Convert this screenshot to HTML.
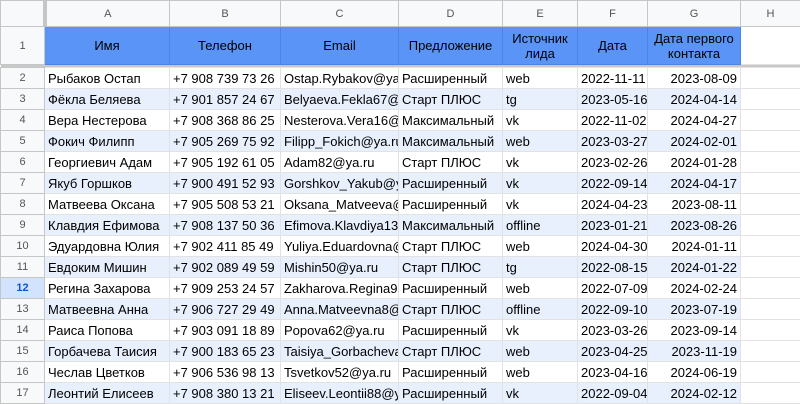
<html><head><style>
body{margin:0;width:800px;height:400px;overflow:hidden;background:#fff;font-family:"Liberation Sans",Arial,sans-serif;}
table{border-collapse:collapse;table-layout:fixed;position:absolute;left:0;top:0;width:800px;}
td{border:1px solid #e2e2e2;padding:0 3px;font-size:13px;color:#000;white-space:nowrap;overflow:hidden;height:20px;box-sizing:border-box;}
tr{height:21px;}
.ch{height:26px;}
.ch td{background:#f8f9fa;color:#555;font-size:11px;text-align:center;border-color:#c4c7c5;height:26px;}
.rh{background:#f8f9fa;color:#555;font-size:11px;text-align:center;border-color:#c4c7c5;padding:0;}
.h{height:38px;}
.h td{height:38px;white-space:normal;}
.h td.c{background:#5a94f7;text-align:center;border-color:#4a84e6;line-height:15px;}
.b td.c{background:#e8f0fe;}
.r{text-align:right;}
.sel{background:#d3e3fd !important;color:#0b57d0 !important;font-weight:bold;}
.fr{height:3px;}
.fr td{height:3px;padding:0;background:#c8c8c8;border:none;}
</style></head><body>
<table>
<colgroup><col style="width:44px"><col style="width:125px"><col style="width:111px"><col style="width:118px"><col style="width:104px"><col style="width:75px"><col style="width:70px"><col style="width:93px"><col style="width:60px"></colgroup>
<tr class="ch"><td style="border-right:4px solid #c4c7c5"></td><td>A</td><td>B</td><td>C</td><td>D</td><td>E</td><td>F</td><td>G</td><td>H</td></tr>
<tr class="h"><td class="rh">1</td><td class="c">Имя</td><td class="c">Телефон</td><td class="c">Email</td><td class="c">Предложение</td><td class="c">Источник лида</td><td class="c">Дата</td><td class="c">Дата первого контакта</td><td></td></tr>
<tr class="fr"><td colspan="9"></td></tr>
<tr><td class="rh">2</td><td class="c">Рыбаков Остап</td><td class="c">+7 908 739 73 26</td><td class="c">Ostap.Rybakov@ya.ru</td><td class="c">Расширенный</td><td class="c">web</td><td class="c">2022-11-11</td><td class="c r">2023-08-09</td><td></td></tr>
<tr class="b"><td class="rh">3</td><td class="c">Фёкла Беляева</td><td class="c">+7 901 857 24 67</td><td class="c">Belyaeva.Fekla67@ya.ru</td><td class="c">Старт ПЛЮС</td><td class="c">tg</td><td class="c">2023-05-16</td><td class="c r">2024-04-14</td><td></td></tr>
<tr><td class="rh">4</td><td class="c">Вера Нестерова</td><td class="c">+7 908 368 86 25</td><td class="c">Nesterova.Vera16@ya.ru</td><td class="c">Максимальный</td><td class="c">vk</td><td class="c">2022-11-02</td><td class="c r">2024-04-27</td><td></td></tr>
<tr class="b"><td class="rh">5</td><td class="c">Фокич Филипп</td><td class="c">+7 905 269 75 92</td><td class="c">Filipp_Fokich@ya.ru</td><td class="c">Максимальный</td><td class="c">web</td><td class="c">2023-03-27</td><td class="c r">2024-02-01</td><td></td></tr>
<tr><td class="rh">6</td><td class="c">Георгиевич Адам</td><td class="c">+7 905 192 61 05</td><td class="c">Adam82@ya.ru</td><td class="c">Старт ПЛЮС</td><td class="c">vk</td><td class="c">2023-02-26</td><td class="c r">2024-01-28</td><td></td></tr>
<tr class="b"><td class="rh">7</td><td class="c">Якуб Горшков</td><td class="c">+7 900 491 52 93</td><td class="c">Gorshkov_Yakub@ya.ru</td><td class="c">Расширенный</td><td class="c">vk</td><td class="c">2022-09-14</td><td class="c r">2024-04-17</td><td></td></tr>
<tr><td class="rh">8</td><td class="c">Матвеева Оксана</td><td class="c">+7 905 508 53 21</td><td class="c">Oksana_Matveeva@ya.ru</td><td class="c">Расширенный</td><td class="c">vk</td><td class="c">2024-04-23</td><td class="c r">2023-08-11</td><td></td></tr>
<tr class="b"><td class="rh">9</td><td class="c">Клавдия Ефимова</td><td class="c">+7 908 137 50 36</td><td class="c">Efimova.Klavdiya13@ya.ru</td><td class="c">Максимальный</td><td class="c">offline</td><td class="c">2023-01-21</td><td class="c r">2023-08-26</td><td></td></tr>
<tr><td class="rh">10</td><td class="c">Эдуардовна Юлия</td><td class="c">+7 902 411 85 49</td><td class="c">Yuliya.Eduardovna@ya.ru</td><td class="c">Старт ПЛЮС</td><td class="c">web</td><td class="c">2024-04-30</td><td class="c r">2024-01-11</td><td></td></tr>
<tr class="b"><td class="rh">11</td><td class="c">Евдоким Мишин</td><td class="c">+7 902 089 49 59</td><td class="c">Mishin50@ya.ru</td><td class="c">Старт ПЛЮС</td><td class="c">tg</td><td class="c">2022-08-15</td><td class="c r">2024-01-22</td><td></td></tr>
<tr><td class="rh sel">12</td><td class="c">Регина Захарова</td><td class="c">+7 909 253 24 57</td><td class="c">Zakharova.Regina9@ya.ru</td><td class="c">Расширенный</td><td class="c">web</td><td class="c">2022-07-09</td><td class="c r">2024-02-24</td><td></td></tr>
<tr class="b"><td class="rh">13</td><td class="c">Матвеевна Анна</td><td class="c">+7 906 727 29 49</td><td class="c">Anna.Matveevna8@ya.ru</td><td class="c">Старт ПЛЮС</td><td class="c">offline</td><td class="c">2022-09-10</td><td class="c r">2023-07-19</td><td></td></tr>
<tr><td class="rh">14</td><td class="c">Раиса Попова</td><td class="c">+7 903 091 18 89</td><td class="c">Popova62@ya.ru</td><td class="c">Расширенный</td><td class="c">vk</td><td class="c">2023-03-26</td><td class="c r">2023-09-14</td><td></td></tr>
<tr class="b"><td class="rh">15</td><td class="c">Горбачева Таисия</td><td class="c">+7 900 183 65 23</td><td class="c">Taisiya_Gorbacheva@ya.ru</td><td class="c">Старт ПЛЮС</td><td class="c">web</td><td class="c">2023-04-25</td><td class="c r">2023-11-19</td><td></td></tr>
<tr><td class="rh">16</td><td class="c">Чеслав Цветков</td><td class="c">+7 906 536 98 13</td><td class="c">Tsvetkov52@ya.ru</td><td class="c">Расширенный</td><td class="c">web</td><td class="c">2023-04-16</td><td class="c r">2024-06-19</td><td></td></tr>
<tr class="b"><td class="rh">17</td><td class="c">Леонтий Елисеев</td><td class="c">+7 908 380 13 21</td><td class="c">Eliseev.Leontii88@ya.ru</td><td class="c">Расширенный</td><td class="c">vk</td><td class="c">2022-09-04</td><td class="c r">2024-02-12</td><td></td></tr>
</table>
</body></html>
